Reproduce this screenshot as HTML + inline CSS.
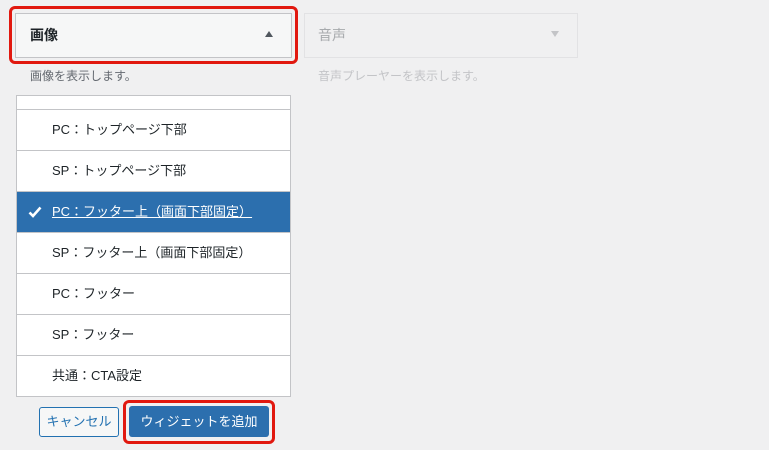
<!DOCTYPE html>
<html><head><meta charset="utf-8"><style>
*{box-sizing:border-box;margin:0;padding:0}
body{width:769px;height:450px;background:#f0f0f1;position:relative;overflow:hidden;font-family:"Liberation Sans","Noto Sans CJK JP",sans-serif;}
.abs{position:absolute}
.red{border:3px solid #e1180f;border-radius:6px}
.hdr{background:#f6f7f7;border:1px solid #c3c4c7}
.list{left:16px;top:95px;width:275px;height:302px;background:#fff;border:1px solid #c3c4c7}
.row{position:absolute;left:0;width:273px;height:41px;border-top:1px solid #c3c4c7;font-size:13px;color:#1d2327;padding-left:35px;line-height:40px}
.sel{background:#2c6fae;color:#fff;border-top-color:#c3c4c7}
.sel span{text-decoration:underline}
</style></head><body>
<div class="abs red" style="left:9px;top:6px;width:289px;height:58px"></div>
<div class="abs hdr" style="left:15px;top:13px;width:277px;height:45px"></div>
<div class="abs" style="left:30px;top:25px;font-size:14px;font-weight:bold;color:#1d2327">画像</div>
<div class="abs" style="left:265px;top:31px;width:0;height:0;border-left:4.5px solid transparent;border-right:4.5px solid transparent;border-bottom:6px solid #50575e"></div>
<div class="abs" style="left:304px;top:13px;width:274px;height:45px;border:1px solid #dcdcde;opacity:.7"></div>
<div class="abs" style="left:318px;top:25px;font-size:14px;color:#a7aaad">音声</div>
<div class="abs" style="left:551px;top:31px;width:0;height:0;border-left:4.5px solid transparent;border-right:4.5px solid transparent;border-top:6px solid #c3c4c7"></div>
<div class="abs" style="left:30px;top:67px;font-size:12px;color:#646970">画像を表示します。</div>
<div class="abs" style="left:318px;top:67px;font-size:12px;color:#c3c4c7">音声プレーヤーを表示します。</div>
<div class="abs list">
<div class="row" style="top:13px">PC：トップページ下部</div>
<div class="row" style="top:54px">SP：トップページ下部</div>
<div class="row sel" style="top:95px"><svg style="position:absolute;left:11px;top:14px" width="14" height="12" viewBox="0 0 14 12"><path d="M1.5 6.5 L5 10 L12.5 1.5" stroke="#fff" stroke-width="2.6" fill="none"/></svg><span>PC：フッター上（画面下部固定）</span></div>
<div class="row" style="top:136px">SP：フッター上（画面下部固定）</div>
<div class="row" style="top:177px">PC：フッター</div>
<div class="row" style="top:218px">SP：フッター</div>
<div class="row" style="top:259px">共通：CTA設定</div>
</div>
<div class="abs" style="left:39px;top:407px;width:80px;height:30px;border:1px solid #2271b1;border-radius:3px;background:#f6f7f7;color:#2271b1;font-size:13px;text-align:center;line-height:28px">キャンセル</div>
<div class="abs red" style="left:123px;top:400px;width:152px;height:44px"></div>
<div class="abs" style="left:129px;top:406px;width:140px;height:31px;background:#2c6fae;border-radius:3px;color:#fff;font-size:13px;text-align:center;line-height:31px">ウィジェットを追加</div>
</body></html>
